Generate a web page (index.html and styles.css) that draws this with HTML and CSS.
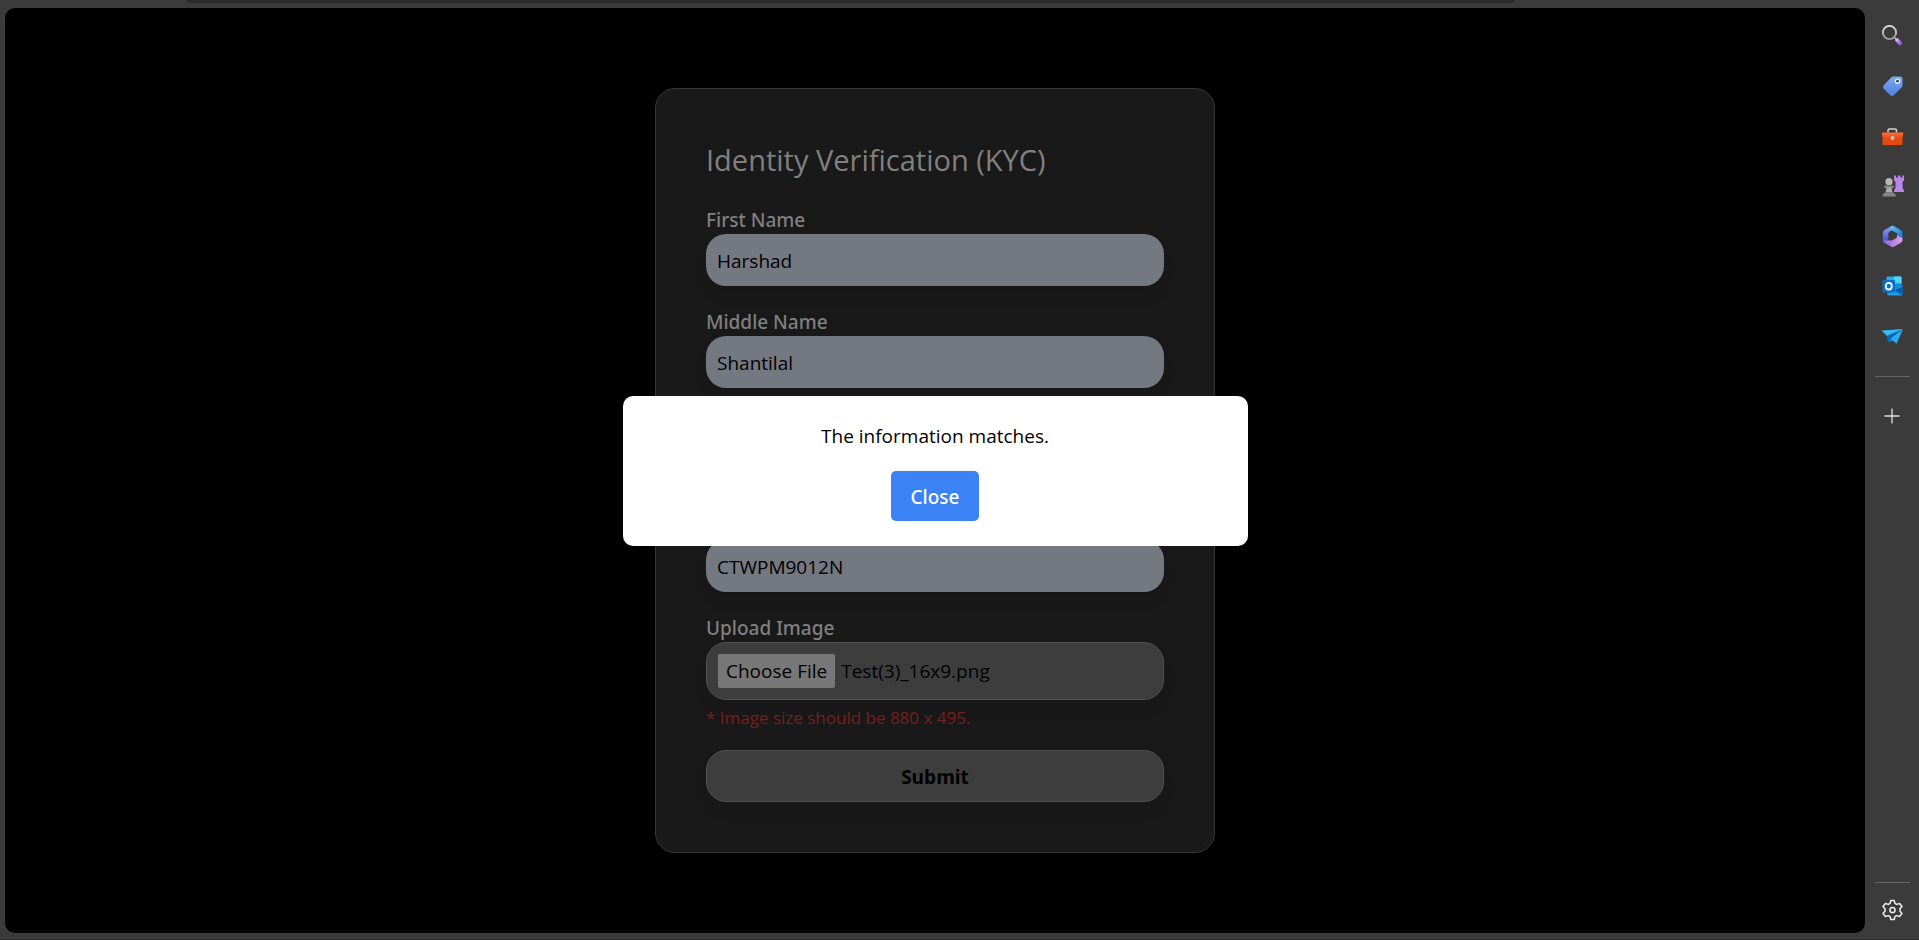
FILE: index.html
```html
<!DOCTYPE html>
<html lang="en">
<head>
<meta charset="utf-8">
<title>Identity Verification (KYC)</title>
<link rel="stylesheet" href="styles.css">
</head>
<body>
<div class="window">
  <div class="topbar"><div class="address-edge"></div></div>
  <main class="stage">
    <form class="card">
      <h1 class="title">Identity Verification (KYC)</h1>
      <div class="field">
        <label class="label" for="first">First Name</label>
        <input class="input" id="first" type="text" value="Harshad">
      </div>
      <div class="field">
        <label class="label" for="middle">Middle Name</label>
        <input class="input" id="middle" type="text" value="Shantilal">
      </div>
      <div class="field covered">
        <input class="input" type="text" aria-label="Name">
      </div>
      <div class="field covered">
        <input class="input" type="text" aria-label="Number" value="CTWPM9012N">
      </div>
      <div class="field upload">
        <label class="label" for="image">Upload Image</label>
        <label class="file">
          <input class="file-input" id="image" type="file">
          <span class="file-button">Choose File</span>
          <span>Test(3)_16x9.png</span>
        </label>
        <p class="note">* Image size should be 880 x 495.</p>
      </div>
      <button class="submit" type="submit">Submit</button>
    </form>
    <dialog class="modal" open>
      <p class="message">The information matches.</p>
      <button class="close" type="button">Close</button>
    </dialog>
  </main>
  <aside class="sidebar">
    <button class="tool" type="button" aria-label="Search">
      <svg viewBox="0 0 22 22"><defs><linearGradient id="sg" x1="0" y1="0" x2="0" y2="1"><stop offset="0" stop-color="#e0e0e0"/><stop offset="1" stop-color="#9a9a9a"/></linearGradient><linearGradient id="pg" x1="0" y1="0" x2="1" y2="1"><stop offset="0" stop-color="#d3a4f5"/><stop offset="1" stop-color="#9a5fd8"/></linearGradient></defs><circle cx="8.500" cy="7.500" r="6.600" fill="none" stroke="url(#sg)" stroke-width="1.900"/><path d="M13 12l2.500 2.500" stroke="#b5b5b5" stroke-width="1.500"/><path d="M16 15l3 3.200" stroke="url(#pg)" stroke-width="4" stroke-linecap="round"/></svg>
    </button>
    <button class="tool" type="button" aria-label="Shopping">
      <svg viewBox="0 0 22 22"><defs><linearGradient id="tg" x1="0" y1="0" x2="0" y2="1"><stop offset="0" stop-color="#7fa9f4"/><stop offset="1" stop-color="#4f80da"/></linearGradient></defs><path d="M12 1.500h7q2.500 0 2.500 2.500v6.500q0 1-.7 1.700l-8 8q-1.800 1.800-3.600 0l-6.400-6.400q-1.800-1.800 0-3.600l7.600-8q.7-.7 1.600-.7z" fill="url(#tg)"/><circle cx="16.500" cy="6.200" r="2.700" fill="#f2f5fa"/><circle cx="16.500" cy="6.200" r="1.400" fill="#33425c"/></svg>
    </button>
    <button class="tool" type="button" aria-label="Tools">
      <svg viewBox="0 0 22 22"><defs><linearGradient id="bg" x1="0" y1="0" x2="0" y2="1"><stop offset="0" stop-color="#ff7038"/><stop offset="1" stop-color="#e04a14"/></linearGradient></defs><path d="M7 7.500V5.500q0-1.500 1.500-1.500h5.500q1.500 0 1.500 1.500v2" fill="none" stroke="#d4d4d4" stroke-width="1.500"/><rect x="1.500" y="11" width="20" height="9" rx="1" fill="#e8490f"/><path d="M1.500 7.500h20q1 0 .8 1l-.8 4q-.2 1-1 1h-18q-.8 0-1-1l-.8-4Q.5 7.500 1.500 7.500z" fill="url(#bg)"/><circle cx="11.500" cy="13" r="2" fill="#bfc4ca"/></svg>
    </button>
    <button class="tool" type="button" aria-label="Games">
      <svg viewBox="0 0 22 22"><path d="M13 .5h2v2h2v-2h2.400v2h2v-2H23v5l-1.500 1.500.2 6.500 1.300 1.500v2H13v-2l1.300-1.500.3-6.500L13 5.500z" fill="#b785e5"/><circle cx="8" cy="6.700" r="3.600" fill="#b9b9b9"/><rect x="3" y="10.500" width="10" height="2.400" rx="1.200" fill="#858585"/><path d="M5.700 12.500h4.800l1 5h-7z" fill="#aaa"/><path d="M4 17.500h8.300q2.700 1.500 2.700 4H1.300q0-2.500 2.700-4z" fill="#858585"/></svg>
    </button>
    <button class="tool" type="button" aria-label="Microsoft 365">
      <svg viewBox="0 0 22 22"><defs><linearGradient id="ma" x1="0" y1="0" x2="0" y2="1"><stop offset="0" stop-color="#8da6f5"/><stop offset="1" stop-color="#4a54cf"/></linearGradient><linearGradient id="mb" x1="0" y1="0" x2="1" y2="1"><stop offset="0" stop-color="#58cdf2"/><stop offset="1" stop-color="#1764c4"/></linearGradient><linearGradient id="mc" x1="0" y1="0" x2="1" y2="0"><stop offset="0" stop-color="#8564db"/><stop offset="1" stop-color="#e0a0ed"/></linearGradient></defs><path d="M11.500 .5L3.500 5.100Q1.800 6.100 1.800 8V15.500q1.500 1 3.500 0l2-1.200V8.800q0-1.200 1.200-2l3.500-2.300z" fill="url(#ma)"/><path d="M10 1.100q1.500-.9 3.200.1l6.600 3.800q1.700 1 1.700 2.900V15q-.3-2-2-3l-3.200-1.900V8.500L9.500 4.800z" fill="url(#mb)"/><path d="M21.500 13v2q0 1.700-1.700 2.700l-6.600 3.800q-1.700 1-3.300.1l-6.600-3.800q-1.500-1-1.500-2.800 1.500 1.200 3.500.3L11 15.500l4-2.300q1.300-.8 1.300-3.200l3.200 1.900q1.700 1 2 1.100z" fill="url(#mc)"/></svg>
    </button>
    <button class="tool" type="button" aria-label="Outlook">
      <svg viewBox="0 0 22 22"><rect x="5.500" y="1.500" width="15" height="15" rx="1.300" fill="#28aeed"/><path d="M13 1.500h6.200q1.300 0 1.300 1.300V8.500H13z" fill="#50d6fb"/><path d="M13 8.500h7.500v6H13z" fill="#158bd8"/><path d="M6 18.500l15.500-8V19q0 1.500-1.500 1.500H7.500q-1.500 0-1.500-2z" fill="#1d9de5"/><path d="M13 15.500l8.300 4.500v-8.500z" fill="#0a5ca8"/><rect x="1.500" y="5" width="12.500" height="12.500" rx="1.200" fill="#0870ca"/><ellipse cx="7.800" cy="11.200" rx="3" ry="3.300" fill="none" stroke="#fff" stroke-width="1.800"/></svg>
    </button>
    <button class="tool" type="button" aria-label="Drop">
      <svg viewBox="0 0 22 22"><path d="M.5 5.500L22 4 7.500 12.500z" fill="#38b9f3"/><path d="M5.500 11L22 4 7 17z" fill="#0866b5"/><path d="M7 17l3-3.500 3 2z" fill="#0c84d5"/><path d="M22 4L9.500 13.500l6 5.300z" fill="#2aaaf0"/></svg>
    </button>
    <hr class="rule">
    <button class="tool add" type="button" aria-label="Add">
      <svg viewBox="0 0 22 22"><path d="M11 3.500v15M3.500 11h15" stroke="#ddd" stroke-width="1.300"/></svg>
    </button>
    <hr class="rule last">
    <button class="tool" type="button" aria-label="Settings">
      <svg viewBox="0 0 22 22" fill="none" stroke="#eee" stroke-width="1.500" stroke-linejoin="round"><path d="M9.800 1.500h3.400l.7 2.900 1.800 1 2.900-.9 2.400 3-2 2.300v2.400l2 2.300-2.400 3-2.900-.9-1.800 1-.7 2.900H9.800l-.7-2.900-1.800-1-2.900.9-2.400-3 2-2.300V9.800l-2-2.300 2.400-3 2.900.9 1.800-1z"/><circle cx="11.500" cy="11" r="2.600"/></svg>
    </button>
  </aside>
</div>
</body>
</html>
```
FILE: styles.css
```css
* { box-sizing: border-box; }
body {
  margin: 0;
  background: #3b3b3b;
  font-family: "Open Sans", "Noto Sans", sans-serif;
  font-size: 19px;
  line-height: 30px;
  color: #000;
}
button, input { font: inherit; color: inherit; }
.window {
  display: grid;
  grid-template-columns: minmax(0, 1fr) 54px;
  grid-template-rows: 8px minmax(0, 1fr);
  min-height: 100vh;
  border-bottom: 1px solid #1c322b;
}
.topbar { grid-column: 1; padding: 0 350px 0 187px; }
.address-edge { height: 3px; border-radius: 0 0 12px 12px; background: #2b2b2b; }
.stage {
  grid-column: 1;
  grid-row: 2;
  position: relative;
  display: flex;
  align-items: center;
  justify-content: center;
  margin: 0 0 6px 5px;
  border-radius: 10px;
  background: #000;
}
.card {
  display: flex;
  flex-direction: column;
  gap: 20px;
  width: 560px;
  padding: 50px;
  border: 1px solid #363636;
  border-radius: 20px;
  background: #191919;
}
.title {
  margin: 0;
  padding-bottom: 3px;
  font-size: 29px;
  font-weight: 400;
  line-height: 42px;
  color: #808080;
}
.field { display: flex; flex-direction: column; }
.covered { padding-top: 30px; }
.label {
  padding-top: 2px;
  font-family: "Noto Sans", sans-serif;
  font-weight: 500;
  line-height: 28px;
  color: #808080;
}
.input, .file, .submit {
  width: 100%;
  border-radius: 20px;
  box-shadow: 0 10px 15px rgba(0, 0, 0, 0.06);
}
.input {
  height: 52px;
  padding: 2px 11px 0;
  border: 0;
  background: #747880;
}
.file {
  display: flex;
  align-items: center;
  gap: 6px;
  height: 58px;
  padding: 0 11px;
  border: 1px solid #505050;
  background: #3d3d3d;
}
.file-input { position: absolute; width: 1px; height: 1px; opacity: 0; }
.file-button {
  padding: 2px 8px;
  border-radius: 2px;
  background: #777;
}
.note {
  margin: 5px 0 0;
  font-size: 17px;
  line-height: 25px;
  color: #771f1f;
}
.submit {
  height: 52px;
  padding: 2px 0 0;
  border: 1px solid #505050;
  background: #3d3d3d;
  font-weight: 700;
}
.modal {
  position: absolute;
  inset: 0;
  display: flex;
  flex-direction: column;
  align-items: center;
  gap: 20px;
  width: 625px;
  height: fit-content;
  margin: auto;
  padding: 25px;
  border: 0;
  border-radius: 10px;
  background: #fff;
}
.message { margin: 0; }
.close {
  padding: 11px 20px 9px;
  border: 0;
  border-radius: 5px;
  background: #3b82f6;
  font-family: "Noto Sans", sans-serif;
  font-weight: 500;
  color: #fff;
}
.sidebar {
  grid-column: 2;
  grid-row: 1 / 3;
  display: flex;
  flex-direction: column;
  align-items: center;
  padding: 11px 0 4px;
}
.tool {
  display: grid;
  place-items: center;
  width: 50px;
  height: 50px;
  padding: 0;
  border: 0;
  background: none;
}
.tool svg { width: 22px; height: 22px; overflow: visible; }
.rule {
  width: 35px;
  margin: 15px 0 14px;
  border: 0;
  border-top: 1px solid #666;
}
.last { margin: auto 0 2px; }
```
